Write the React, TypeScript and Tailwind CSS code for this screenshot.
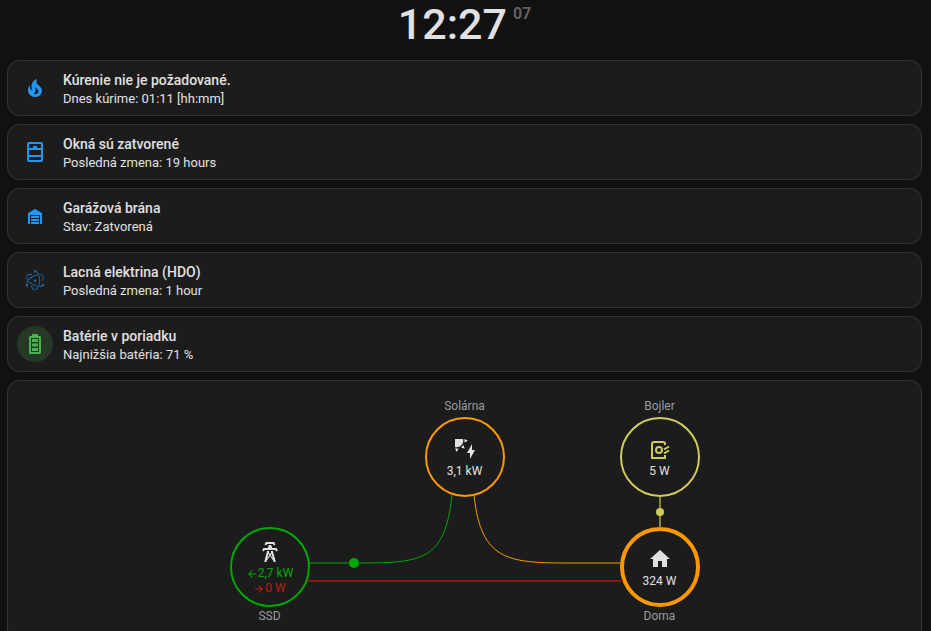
import React from 'react';
import { SiElectron } from 'react-icons/si';

const icons = {
  fire: 'M17.66 11.2C17.43 10.9 17.15 10.64 16.89 10.38C16.22 9.78 15.46 9.35 14.82 8.72C13.33 7.26 13 4.85 13.95 3C13 3.23 12.17 3.75 11.46 4.32C8.87 6.4 7.85 10.07 9.07 13.22C9.11 13.32 9.15 13.42 9.15 13.55C9.15 13.77 9 13.97 8.8 14.05C8.57 14.15 8.33 14.09 8.14 13.93C8.08 13.88 8.04 13.83 8 13.76C6.87 12.33 6.69 10.28 7.45 8.64C5.78 10 4.87 12.3 5 14.47C5.06 14.97 5.12 15.47 5.29 15.97C5.43 16.57 5.7 17.17 6 17.7C7.08 19.43 8.95 20.67 10.96 20.92C13.1 21.19 15.39 20.8 17.03 19.32C18.86 17.66 19.5 15 18.56 12.72L18.43 12.46C18.22 12 17.66 11.2 17.66 11.2M14.5 17.5C14.22 17.74 13.76 18 13.4 18.1C12.28 18.5 11.16 17.94 10.5 17.28C11.69 17 12.4 16.12 12.61 15.23C12.78 14.43 12.46 13.77 12.33 13C12.21 12.26 12.23 11.63 12.5 10.94C12.69 11.32 12.89 11.7 13.13 12C13.9 13 15.11 13.44 15.37 14.8C15.41 14.94 15.43 15.08 15.43 15.23C15.46 16.05 15.1 16.95 14.5 17.5H14.5Z',
  window: 'M6 8H10V6H14V8H18V4H6V8M18 10H6V15H18V10M18 17H6V20H18V17M6 2H18A2 2 0 0 1 20 4V20A2 2 0 0 1 18 22H6A2 2 0 0 1 4 20V4A2 2 0 0 1 6 2Z',
  garage: 'M19 20H17V11H7V20H5V9L12 5L19 9V20M8 12H16V14H8V12M8 15H16V17H8V15M16 18V20H8V18H16Z',
  battery: 'M16 20H8V6H16M16.67 4H15V2H9V4H7.33A1.33 1.33 0 0 0 6 5.33V20.67C6 21.4 6.6 22 7.33 22H16.67A1.33 1.33 0 0 0 18 20.67V5.33C18 4.6 17.4 4 16.67 4M15 16H9V19H15V16M15 7H9V10H15V7M15 11.5H9V14.5H15V11.5Z',
  solar: 'M11.45 2V5.55L15 3.77L11.45 2M10.45 8L8 10.46L11.75 11.71L10.45 8M2 11.45L3.77 15L5.55 11.45H2M10 2H2V10C2.57 10.17 3.17 10.25 3.77 10.25C7.35 10.26 10.26 7.35 10.27 3.75C10.26 3.16 10.17 2.57 10 2M17 22V16H14L19 7V13H22L17 22Z',
  tower: 'M8.28 5.45L6.5 4.55L7.76 2H16.23L17.5 4.55L15.72 5.44L15 4H9L8.28 5.45M18.62 8H14.09L13.3 5H10.7L9.91 8H5.38L4.1 10.55L5.89 11.44L6.62 10H17.38L18.1 11.45L19.89 10.56L18.62 8M17.77 22H15.7L15.46 21.1L12 15.9L8.53 21.1L8.3 22H6.23L9.12 11H11.19L10.83 12.35L12 14.1L13.16 12.35L12.81 11H14.88L17.77 22M11.4 15L10.5 13.65L9.32 18.13L11.4 15M14.68 18.12L13.5 13.64L12.6 15L14.68 18.12Z',
  home: 'M10 20V14H14V20H19V12H22L12 3L2 12H5V20H10Z',
  left: 'M20 11V13H8L13.5 18.5L12.08 19.92L4.16 12L12.08 4.08L13.5 5.5L8 11H20Z',
  right: 'M4 11V13H16L10.5 18.5L11.92 19.92L19.84 12L11.92 4.08L10.5 5.5L16 11H4Z',
};

interface IconProps {
  name: keyof typeof icons;
  className?: string;
}

function Icon({ name, className }: IconProps) {
  return (
    <svg viewBox="0 0 24 24" fill="currentColor" className={className} aria-hidden="true">
      <path d={icons[name]} />
    </svg>
  );
}

function BoilerIcon() {
  return (
    <svg viewBox="0 0 24 24" fill="none" stroke="currentColor" strokeWidth="2" className="w-6 h-6 mb-0.5 text-[#d0cc5b]" aria-hidden="true">
      <path d="M17 8V7A2 2 0 0 0 15 5H6A2 2 0 0 0 4 7V21H17V18" />
      <circle cx="11" cy="13" r="3" />
      <path d="M16 12.500L21 9.500M16 16.500L21 13.500" />
    </svg>
  );
}

const tiles = [
  { title: 'Kúrenie nie je požadované.', detail: 'Dnes kúrime: 01:11 [hh:mm]', icon: <Icon name="fire" className="w-6 h-6" /> },
  { title: 'Okná sú zatvorené', detail: 'Posledná zmena: 19 hours', icon: <Icon name="window" className="w-6 h-6" /> },
  { title: 'Garážová brána', detail: 'Stav: Zatvorená', icon: <Icon name="garage" className="w-6 h-6" /> },
  { title: 'Lacná elektrina (HDO)', detail: 'Posledná zmena: 1 hour', icon: <SiElectron className="w-5 h-5" /> },
  { title: 'Batérie v poriadku', detail: 'Najnižšia batéria: 71 %', icon: <Icon name="battery" className="w-6 h-6" />, active: true },
];

interface NodeProps {
  className: string;
  children: React.ReactNode;
}

function Node({ className, children }: NodeProps) {
  return (
    <div className={`flex flex-col items-center justify-center w-20 h-20 pt-0.5 rounded-full ${className}`}>
      {children}
    </div>
  );
}

export default function App() {
  return (
    <main className="min-h-screen bg-[#111111] pl-[7px] pr-[9px] pb-2 font-[Roboto,sans-serif] text-[#e1e1e1]">
      <time className="flex justify-center items-start gap-1.5 h-[60px] pt-1 font-medium">
        <span className="text-[43px] leading-10">12:27</span>
        <span className="text-base leading-5 font-bold text-[#606060]">07</span>
      </time>

      <div className="flex flex-col gap-2">
        {tiles.map((tile) => (
          <section key={tile.title} className="flex items-center gap-2.5 h-14 px-[9px] rounded-xl border border-[#333333] bg-[#1c1c1c]">
            <div
              className={`flex items-center justify-center w-9 h-9 rounded-full ${
                tile.active ? 'bg-[#263826] text-[#4caf50]' : 'text-[#2196f3]'
              }`}
            >
              {tile.icon}
            </div>
            <div>
              <h2 className="text-sm leading-[22px] font-medium">{tile.title}</h2>
              <p className="text-[13px] leading-4">{tile.detail}</p>
            </div>
          </section>
        ))}

        <section className="px-4 pt-4 pb-4 rounded-xl border border-[#333333] bg-[#1c1c1c] text-xs leading-4">
          <div className="relative w-full max-w-[470px] mx-auto">
            <div className="flex justify-between text-center">
              <div className="w-20" />
              <div className="flex flex-col gap-0.5">
                <span className="leading-[18px] text-[#9b9b9b]">Solárna</span>
                <Node className="border-2 border-[#ff9800]">
                  <Icon name="solar" className="w-6 h-6 mb-0.5" />
                  <span>3,1 kW</span>
                </Node>
              </div>
              <div className="flex flex-col gap-0.5">
                <span className="leading-[18px] text-[#9b9b9b]">Bojler</span>
                <Node className="border-2 border-[#d0cc5b]">
                  <BoilerIcon />
                  <span>5 W</span>
                </Node>
              </div>
            </div>

            <div className="flex justify-between mt-[30px] text-center">
              <div className="flex flex-col gap-px">
                <Node className="border-2 border-[#00a900]">
                  <Icon name="tower" className="w-6 h-6 mb-0.5" />
                  <span className="flex items-center leading-[15px] text-[#00a900]">
                    <Icon name="left" className="w-3 h-3" />2,7 kW
                  </span>
                  <span className="flex items-center leading-[15px] text-[#b9210f]">
                    <Icon name="right" className="w-3 h-3" />0 W
                  </span>
                </Node>
                <span className="text-[#9b9b9b]">SSD</span>
              </div>
              <div className="flex flex-col gap-px">
                <Node className="border-4 border-[#ff9800]">
                  <Icon name="home" className="w-6 h-6 mb-0.5" />
                  <span>324 W</span>
                </Node>
                <span className="text-[#9b9b9b]">Doma</span>
              </div>
            </div>

            {/* power lines between the circles */}
            <svg viewBox="0 0 470 230" fill="none" className="absolute inset-x-0 top-0 w-full" aria-hidden="true">
              <path d="M79 166H123C190 166 215 166 222 98" stroke="#00a900" />
              <path d="M244 98C251 166 280 166 345 166H391" stroke="#ff9800" />
              <path d="M77 184H393" stroke="#861a10" strokeWidth="2" />
              <path d="M430 100V131" stroke="#888540" strokeWidth="2" />
              <circle cx="124" cy="166" r="5" fill="#00a900" />
              <circle cx="430" cy="115" r="4" fill="#d0cc5b" />
            </svg>
          </div>
        </section>
      </div>
    </main>
  );
}
